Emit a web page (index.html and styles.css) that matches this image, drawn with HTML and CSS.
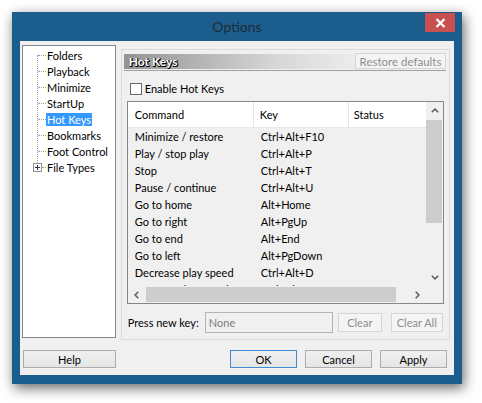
FILE: index.html
```html
<!DOCTYPE html>
<html>
<head>
<meta charset="utf-8">
<link rel="stylesheet" href="styles.css">
</head>
<body>
<div class="window">
  <div class="titlebar">
    <span class="title">Options</span>
    <button class="close"><svg width="11" height="10" viewBox="0 0 11 10"><path d="M1.5 1 L9.5 9 M9.5 1 L1.5 9" stroke="#fff" stroke-width="2.2" fill="none"/></svg></button>
  </div>
  <div class="client">
    <div class="main">
      <div class="tree">
        <ul>
          <li><span class="branch"></span><span class="label">Folders</span></li>
          <li><span class="branch"></span><span class="label">Playback</span></li>
          <li><span class="branch"></span><span class="label">Minimize</span></li>
          <li><span class="branch"></span><span class="label">StartUp</span></li>
          <li><span class="branch"></span><span class="label selected">Hot Keys</span></li>
          <li><span class="branch"></span><span class="label">Bookmarks</span></li>
          <li><span class="branch"></span><span class="label">Foot Control</span></li>
          <li class="expandable"><span class="expander"><svg width="9" height="9" viewBox="0 0 9 9"><rect x="0.5" y="0.5" width="8" height="8" fill="#fff" stroke="#919191"/><path d="M2 4.5 H7 M4.5 2 V7" stroke="#3a3a3a" stroke-width="1"/></svg></span><span class="branch short"></span><span class="label">File Types</span></li>
        </ul>
      </div>
      <div class="group">
        <div class="pagehead">
          <div class="bar">Hot Keys</div>
          <button class="btn disabled restore">Restore defaults</button>
        </div>
        <div class="body">
          <div class="check"><span class="box"></span><span>Enable Hot Keys</span></div>
          <div class="list">
            <div class="view">
              <div class="lhead">
                <div class="c1">Command</div>
                <div class="c2">Key</div>
                <div class="c3">Status</div>
              </div>
              <div class="row"><div class="c1">Minimize / restore</div><div class="c2">Ctrl+Alt+F10</div><div class="c3"></div></div>
              <div class="row"><div class="c1">Play / stop play</div><div class="c2">Ctrl+Alt+P</div><div class="c3"></div></div>
              <div class="row"><div class="c1">Stop</div><div class="c2">Ctrl+Alt+T</div><div class="c3"></div></div>
              <div class="row"><div class="c1">Pause / continue</div><div class="c2">Ctrl+Alt+U</div><div class="c3"></div></div>
              <div class="row"><div class="c1">Go to home</div><div class="c2">Alt+Home</div><div class="c3"></div></div>
              <div class="row"><div class="c1">Go to right</div><div class="c2">Alt+PgUp</div><div class="c3"></div></div>
              <div class="row"><div class="c1">Go to end</div><div class="c2">Alt+End</div><div class="c3"></div></div>
              <div class="row"><div class="c1">Go to left</div><div class="c2">Alt+PgDown</div><div class="c3"></div></div>
              <div class="row"><div class="c1">Decrease play speed</div><div class="c2">Ctrl+Alt+D</div><div class="c3"></div></div>
              <div class="row"><div class="c1">Increase play speed</div><div class="c2">Ctrl+Alt+I</div><div class="c3"></div></div>
            </div>
            <div class="vscroll">
              <div class="sbtn"><svg width="8" height="5" viewBox="0 0 8 5"><path d="M0.8 4.3 L4 1.1 L7.2 4.3" stroke="#606060" stroke-width="1.6" fill="none"/></svg></div>
              <div class="vthumb"></div>
              <div class="spacer"></div>
              <div class="sbtn"><svg width="8" height="5" viewBox="0 0 8 5"><path d="M0.8 0.7 L4 3.9 L7.2 0.7" stroke="#606060" stroke-width="1.6" fill="none"/></svg></div>
            </div>
            <div class="hscroll">
              <div class="sbtn"><svg width="5" height="8" viewBox="0 0 5 8"><path d="M4.3 0.8 L1.1 4 L4.3 7.2" stroke="#606060" stroke-width="1.6" fill="none"/></svg></div>
              <div class="hthumb"></div>
              <div class="spacer"></div>
              <div class="sbtn"><svg width="5" height="8" viewBox="0 0 5 8"><path d="M0.7 0.8 L3.9 4 L0.7 7.2" stroke="#606060" stroke-width="1.6" fill="none"/></svg></div>
            </div>
            <div class="corner"></div>
          </div>
          <div class="keyrow">
            <span class="keylabel">Press new key:</span>
            <div class="input">None</div>
            <button class="btn disabled clear">Clear</button>
            <button class="btn disabled clearall">Clear All</button>
          </div>
        </div>
      </div>
    </div>
    <div class="buttons">
      <button class="btn help">Help</button>
      <button class="btn action ok">OK</button>
      <button class="btn action">Cancel</button>
      <button class="btn action">Apply</button>
    </div>
  </div>
</div>
</body>
</html>
```

FILE: styles.css
```css
body {
  margin: 0;
  width: 482px;
  height: 403px;
  overflow: hidden;
  background: #ffffff;
  font-family: "Lato", "Noto Sans", sans-serif;
  font-size: 11px;
  color: #000;
}

.window {
  margin: 12px 0 0 12px;
  width: 450px;
  height: 372px;
  background: #1b5e8e;
  box-shadow: 2px 4px 12px rgba(0, 0, 0, 0.6);
  display: flex;
  flex-direction: column;
}

.titlebar {
  height: 29px;
  display: grid;
  grid-template-columns: 1fr auto 1fr;
  align-items: start;
  padding: 0 7px;
}

.title {
  grid-column: 2;
  font-size: 14px;
  line-height: 30px;
  color: #1f2a33;
}

.close {
  grid-column: 3;
  justify-self: end;
  width: 30px;
  height: 19px;
  margin-top: 1px;
  padding: 0;
  border: 0;
  background: #c75050;
  display: flex;
  align-items: center;
  justify-content: center;
}

.client {
  margin: 0 8px;
  height: 334px;
  background: #f0f0f0;
  padding: 4px 4px 0 2px;
  box-sizing: border-box;
}

.main {
  display: flex;
  align-items: flex-start;
  height: 295px;
}

/* tree */
.tree {
  width: 94px;
  height: 293px;
  box-sizing: border-box;
  border: 1px solid #828790;
  background: #fff;
}

.tree ul {
  list-style: none;
  margin: 0;
  padding: 1px 0 0 0;
  position: relative;
}

.tree ul::before {
  content: "";
  position: absolute;
  left: 14px;
  top: 9px;
  bottom: 12px;
  border-left: 1px dotted #a0a0a0;
}

.tree li {
  height: 16px;
  display: flex;
  align-items: center;
  padding-left: 15px;
}

.tree li.expandable {
  padding-left: 10px;
}

.expander {
  width: 9px;
  height: 9px;
  display: flex;
  position: relative;
  z-index: 1;
}

.branch {
  width: 8px;
  height: 0;
  border-top: 1px dotted #a0a0a0;
}

.branch.short {
  width: 4px;
}

.label {
  padding: 0 1px;
  line-height: 13px;
  white-space: nowrap;
}

.label.selected {
  background: #3399ff;
  color: #fff;
}

/* group */
.group {
  width: 330px;
  height: 291px;
  margin: 4px 0 0 5px;
  border: 1px solid #dadada;
  box-sizing: border-box;
}

.pagehead {
  display: flex;
  align-items: flex-end;
  margin: 3px 3px 0 2px;
  height: 16px;
  padding-bottom: 1px;
  border-bottom: 1px solid #a0a0a0;
}

.bar {
  flex: 1;
  height: 15px;
  line-height: 15px;
  padding-left: 5px;
  background: linear-gradient(to right, #949494 0%, #acacac 25%, #d6d6d6 65%, #ececec 100%);
  color: #fff;
  font-size: 12px;
  font-weight: bold;
  text-shadow: 1px 1px 0 #000, 1px 0 0 #000, 0 1px 0 #000;
}

.btn {
  box-sizing: border-box;
  height: 18px;
  padding: 0;
  border: 1px solid #acacac;
  background: linear-gradient(#f0f0f0, #e5e5e5);
  font-family: inherit;
  font-size: 11px;
  color: #000;
}

.btn.disabled {
  border-color: #d5d5d5;
  background: #f4f4f4;
  color: #8d8d8d;
}

.restore {
  width: 91px;
  height: 16px;
  font-size: 11.5px;
}

.body {
  padding: 0 5px;
}

.check {
  display: flex;
  align-items: center;
  height: 13px;
  margin: 11px 0 0 3px;
}

.box {
  width: 12px;
  height: 12px;
  box-sizing: border-box;
  border: 1px solid #6a6a6a;
  background: #fff;
  margin-right: 3px;
}

/* list view */
.list {
  margin-top: 6px;
  height: 203px;
  box-sizing: border-box;
  border: 1px solid #828790;
  background: #f0f0f0;
  display: grid;
  grid-template-columns: 1fr 17px;
  grid-template-rows: 1fr 17px;
}

.view {
  overflow: hidden;
}

.lhead {
  display: flex;
  height: 25px;
  line-height: 25px;
  background: #fff;
  border-bottom: 1px solid #e8e8e8;
}

.row {
  display: flex;
  height: 17px;
  line-height: 17px;
  white-space: nowrap;
}

.c1 {
  width: 126px;
  padding-left: 7px;
  box-sizing: border-box;
  flex: none;
}

.c2 {
  width: 95px;
  padding-left: 7px;
  box-sizing: border-box;
  flex: none;
}

.c3 {
  flex: 1;
  padding-left: 6px;
}

.lhead .c1,
.lhead .c2 {
  border-right: 1px solid #e5e5e5;
}

.lhead .c2 {
  padding-left: 6px;
}

.lhead .c3 {
  padding-left: 5px;
}

.vscroll {
  display: flex;
  flex-direction: column;
}

.hscroll {
  display: flex;
}

.sbtn {
  width: 17px;
  height: 17px;
  flex: none;
  display: flex;
  align-items: center;
  justify-content: center;
}

.spacer {
  flex: 1;
}

.vthumb {
  margin: 1px 1px 0 0;
  height: 103px;
  background: #cdcdcd;
}

.hthumb {
  margin: 1px 0 1px 1px;
  width: 250px;
  background: #cdcdcd;
}

.corner {
  background: #f0f0f0;
}

/* key row */
.keyrow {
  display: flex;
  align-items: center;
  height: 21px;
  margin-top: 8px;
  padding-left: 1px;
}

.keylabel {
  width: 77px;
  flex: none;
  white-space: nowrap;
}

.input {
  width: 128px;
  height: 21px;
  box-sizing: border-box;
  border: 1px solid #b4b4b4;
  background: #f0f0f0;
  color: #7a7a7a;
  padding-left: 3px;
  line-height: 19px;
}

.clear {
  width: 44px;
  height: 19px;
  margin-left: 5px;
}

.clearall {
  width: 52px;
  height: 19px;
  margin-left: 9px;
}

/* bottom buttons */
.buttons {
  display: flex;
  margin-top: 10px;
  padding: 0 3px 0 1px;
}

.help {
  width: 93px;
}

.action {
  width: 67px;
  margin-left: 8px;
}

.ok {
  margin-left: auto;
  border-color: #3c8ad8;
}
```
